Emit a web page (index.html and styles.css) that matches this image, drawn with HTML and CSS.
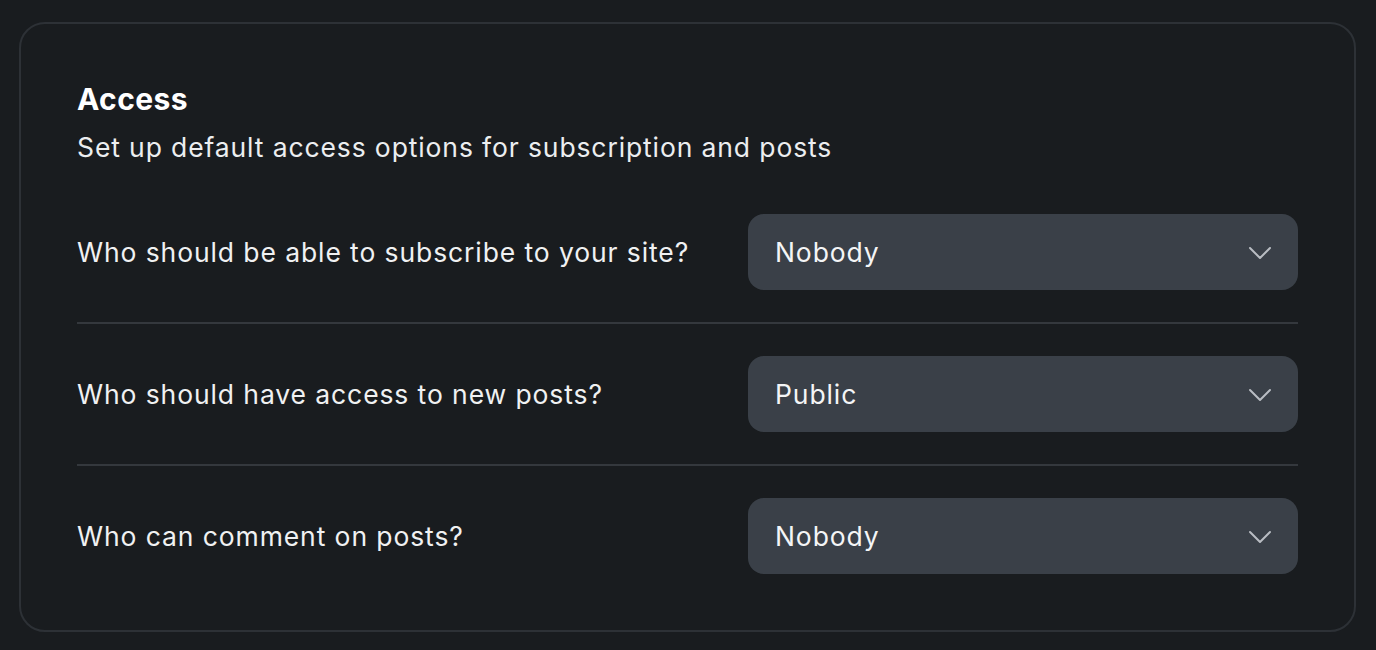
FILE: index.html
```html
<!DOCTYPE html>
<html lang="en">
<head>
<meta charset="utf-8">
<title>Access</title>
<link rel="stylesheet" href="styles.css">
</head>
<body>
<div class="page">
  <section class="card">
    <header class="head">
      <h2 class="title">Access</h2>
      <p class="subtitle">Set up default access options for subscription and posts</p>
    </header>
    <div class="rows">
      <div class="row">
        <span class="label">Who should be able to subscribe to your site?</span>
        <div class="select"><span>Nobody</span><svg class="chev" width="24" height="14" viewBox="0 0 24 14"><path d="M2 2 L12 12 L22 2" fill="none" stroke="currentColor" stroke-width="2" stroke-linecap="round" stroke-linejoin="round"/></svg></div>
      </div>
      <div class="row">
        <span class="label">Who should have access to new posts?</span>
        <div class="select"><span>Public</span><svg class="chev" width="24" height="14" viewBox="0 0 24 14"><path d="M2 2 L12 12 L22 2" fill="none" stroke="currentColor" stroke-width="2" stroke-linecap="round" stroke-linejoin="round"/></svg></div>
      </div>
      <div class="row">
        <span class="label">Who can comment on posts?</span>
        <div class="select"><span>Nobody</span><svg class="chev" width="24" height="14" viewBox="0 0 24 14"><path d="M2 2 L12 12 L22 2" fill="none" stroke="currentColor" stroke-width="2" stroke-linecap="round" stroke-linejoin="round"/></svg></div>
      </div>
    </div>
  </section>
</div>
</body>
</html>
```

FILE: styles.css
```css
* { box-sizing: border-box; }
html, body { margin: 0; padding: 0; background: #191c1f; }
body {
  font-family: Inter, "Noto Sans", sans-serif;
  color: #f2f3f4;
  width: 1376px;
  height: 650px;
  overflow: hidden;
}
.page { padding: 22px 20px 0 19px; }
.card {
  border: 2px solid #2d3136;
  border-radius: 26px;
  padding: 56px 56px 55px 56px;
  height: 610px;
}
.head { margin: 0; }
.title {
  margin: 0;
  font-size: 30px;
  line-height: 38px;
  font-weight: 700;
  letter-spacing: 0.4px;
  color: #ffffff;
}
.subtitle {
  margin: 13px 0 0 0;
  font-size: 26.5px;
  line-height: 32px;
  letter-spacing: 0.88px;
  color: #eceef0;
}
.rows { margin-top: 19px; }
.row {
  display: flex;
  align-items: center;
  justify-content: space-between;
  padding: 32px 0;
  border-bottom: 2px solid #34383d;
}
.row:last-child { border-bottom: none; padding-bottom: 0; }
.label {
  font-size: 26.5px;
  letter-spacing: 0.9px;
  color: #f0f1f2;
}
.select {
  width: 550px;
  height: 76px;
  background: #3a4048;
  border-radius: 16px;
  display: flex;
  align-items: center;
  justify-content: space-between;
  padding: 0 26px 0 27px;
  font-size: 26.5px;
  letter-spacing: 0.9px;
  color: #f4f5f6;
}
.chev { color: #b9bdc3; margin-top: 2px; }
```
